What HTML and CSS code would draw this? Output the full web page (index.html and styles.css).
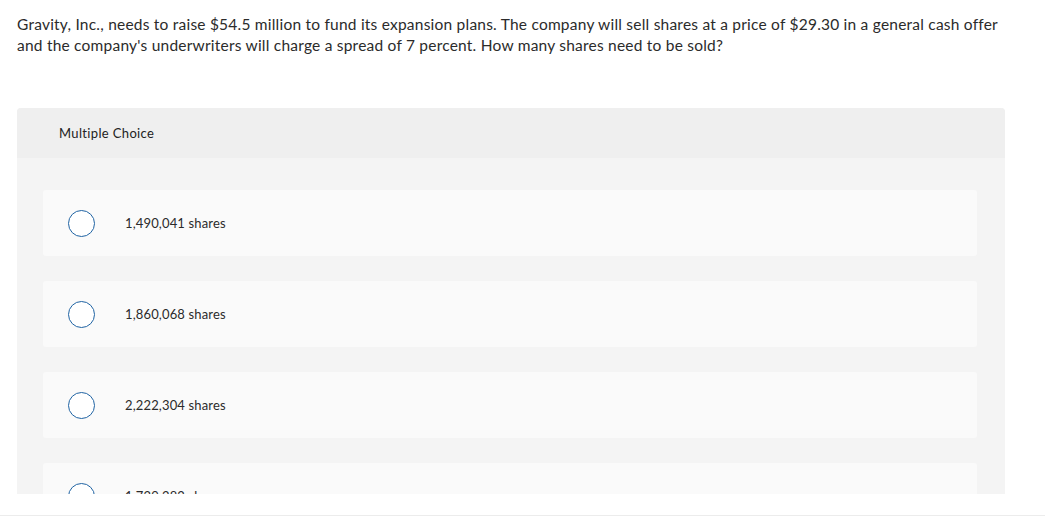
FILE: index.html
```html
<!DOCTYPE html>
<html>
<head>
<meta charset="utf-8">
<link rel="stylesheet" href="styles.css">
</head>
<body>
<div class="viewport">
  <p class="question">Gravity, Inc., needs to raise $54.5 million to fund its expansion plans. The company will sell shares at a price of $29.30 in a general cash offer and the company's underwriters will charge a spread of 7 percent. How many shares need to be sold?</p>
  <section class="panel">
    <div class="panel-head">Multiple Choice</div>
    <div class="panel-body">
      <label class="option"><span class="radio"></span><span class="opt-text">1,490,041 shares</span></label>
      <label class="option"><span class="radio"></span><span class="opt-text">1,860,068 shares</span></label>
      <label class="option"><span class="radio"></span><span class="opt-text">2,222,304 shares</span></label>
      <label class="option"><span class="radio"></span><span class="opt-text">1,729,282 shares</span></label>
    </div>
  </section>
</div>
<footer class="footer">
  <span class="tick t1"></span>
  <span class="tick t2"></span>
  <span class="tick t3"></span>
  <span class="tick t4"></span>
</footer>
</body>
</html>
```

FILE: styles.css
```css
html, body {
  margin: 0;
  padding: 0;
  background: #ffffff;
}
body {
  font-family: Lato, "Open Sans", Arial, sans-serif;
  color: #2b2b2b;
}
.viewport {
  height: 494px;
  overflow: hidden;
}
.question {
  margin: 0;
  padding: 14px 40px 0 17px;
  font-size: 15.5px;
  letter-spacing: 0.22px;
  line-height: 21px;
}
.panel {
  margin: 52px 40px 0 17px;
  background: #f4f4f4;
  border-radius: 4px 4px 0 0;
}
.panel-head {
  height: 50px;
  display: flex;
  align-items: center;
  padding-left: 42px;
  background: #efefef;
  border-radius: 4px 4px 0 0;
  font-size: 13px;
  letter-spacing: 0.35px;
  color: #222;
}
.panel-body {
  padding: 32px 28px 30px 26px;
  display: flex;
  flex-direction: column;
  gap: 25px;
}
.option {
  height: 66px;
  background: #fafafa;
  border-radius: 3px;
  display: flex;
  align-items: center;
  padding-left: 25px;
}
.radio {
  width: 25px;
  height: 25px;
  border: 1.5px solid #1f63a3;
  border-radius: 50%;
  background: #fff;
  flex: none;
}
.opt-text {
  margin-left: 30px;
  font-size: 13px;
  letter-spacing: 0.15px;
  color: #2b2b2b;
}
.footer {
  height: 32px;
  position: relative;
}
.footer::before {
  content: "";
  display: block;
  margin-top: 21px;
  border-top: 1px solid #ececec;
}
.tick {
  position: absolute;
  top: 25px;
  width: 1px;
  height: 7px;
  background: #e6e6e6;
}
.t1 { left: 347px; }
.t2 { left: 438px; }
.t3 { left: 575px; }
.t4 { left: 672px; }
```
